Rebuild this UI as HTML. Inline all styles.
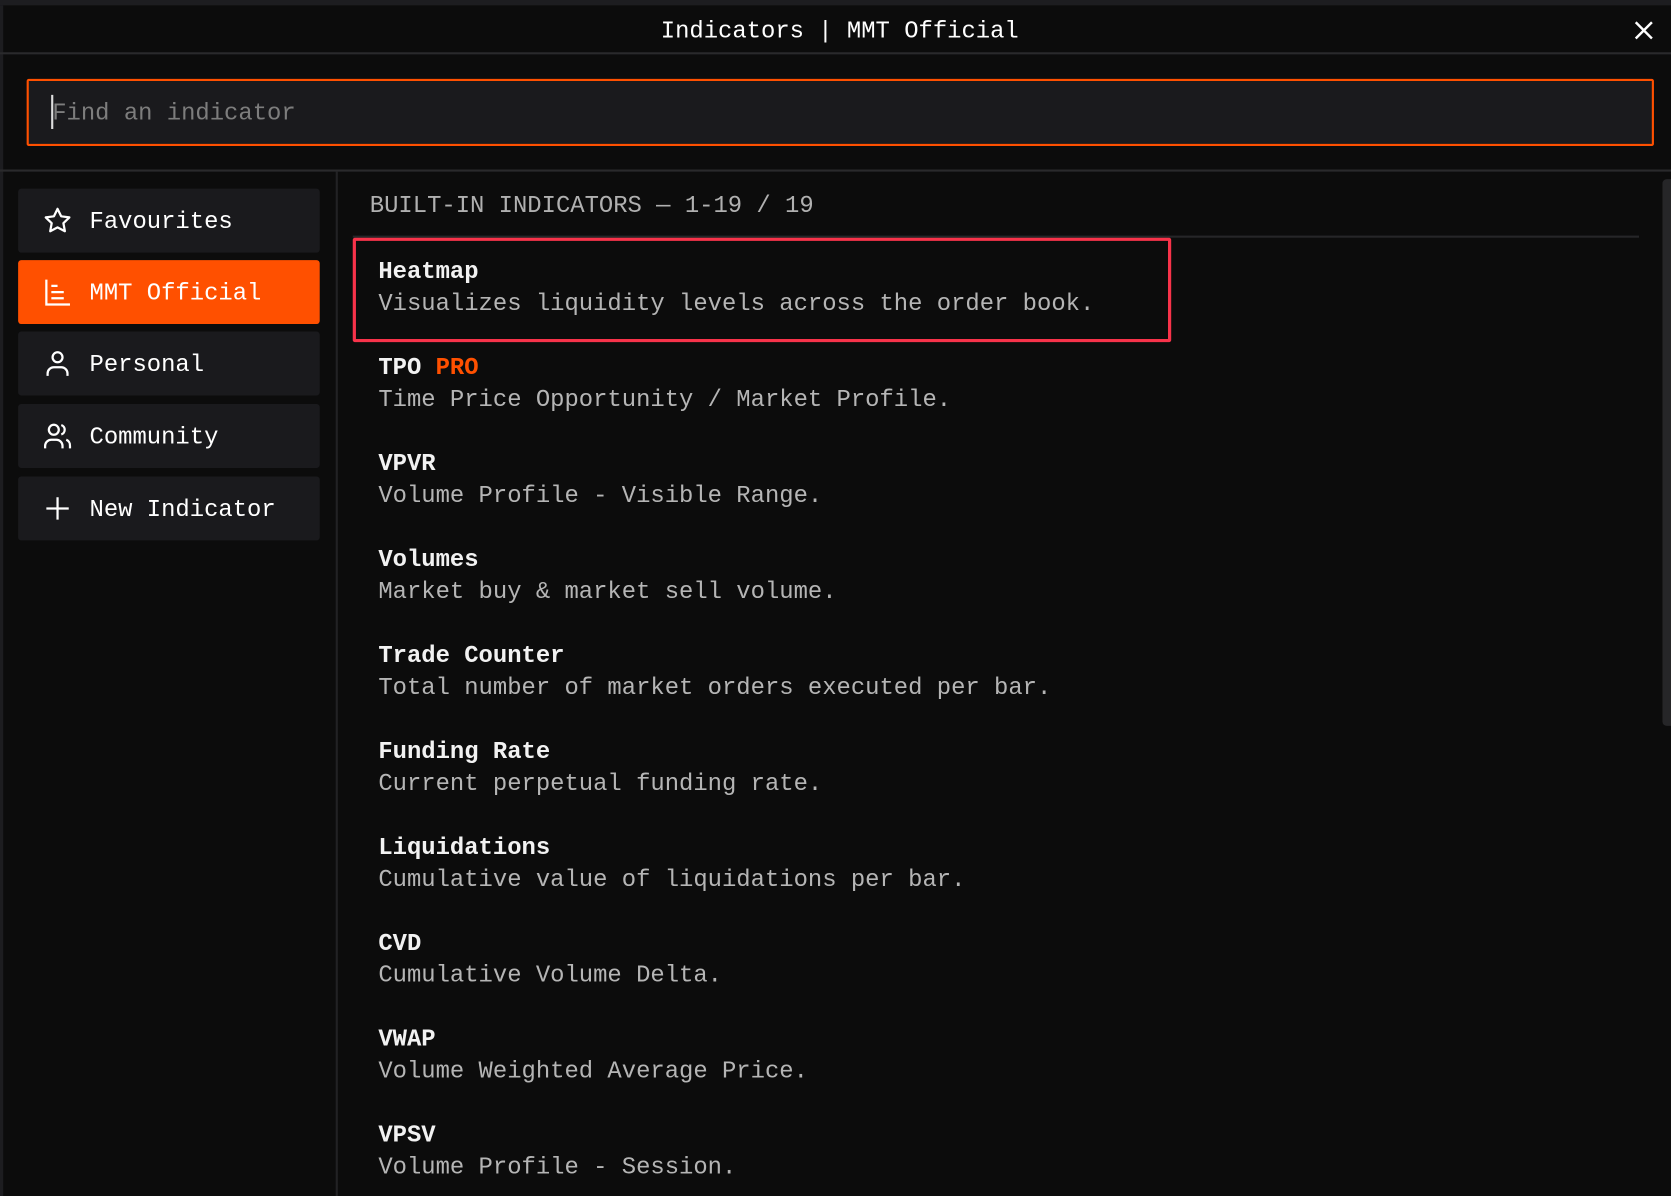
<!DOCTYPE html>
<html><head><meta charset="utf-8"><style>
html,body{margin:0;padding:0;background:#0c0c0c;width:1671px;height:1196px;overflow:hidden}
#w{position:absolute;left:0;top:0;width:1568px;height:1122px;transform:scale(1.06569,1.06595);transform-origin:0 0;font-family:"Liberation Mono",monospace;font-size:22.4px;color:#fff;background:#0c0c0c}
.a{position:absolute;white-space:pre}
.it{position:absolute;left:17px;width:283px;height:60px;background:#1a1a1d;border-radius:3px}
.it .t{position:absolute;left:67px;top:17px;line-height:28px}
.it svg{position:absolute;left:23px;top:16px}
.ti{font-weight:bold;color:#f2f2f2}
.de{color:#b5b5b5}
</style></head><body><div id="w">
<div class="a" style="left:0;top:0;width:1568px;height:5px;background:#1d1d20"></div>
<div class="a" style="left:0;top:5px;width:3px;height:1117px;background:#1d1d20"></div>
<div class="a" style="left:0;top:49px;width:1568px;height:2px;background:#2a2a2c"></div>
<div class="a" style="left:4px;top:15px;width:1568px;text-align:center;line-height:28px">Indicators | MMT Official</div>
<svg class="a" style="left:1533px;top:19px" width="19" height="19" viewBox="0 0 20 20"><path d="M2 2L18 18M18 2L2 18" stroke="#fff" stroke-width="2.4"/></svg>
<div class="a" style="left:25px;top:74px;width:1523px;height:59px;background:#1a1a1d;border:2px solid #ff5000;border-radius:2px"></div>
<div class="a" style="left:49px;top:92px;line-height:28px;color:#7d7d7d">Find an indicator</div>
<div class="a" style="left:48px;top:89px;width:2px;height:32px;background:#ddd"></div>
<div class="a" style="left:0;top:159px;width:1568px;height:2px;background:#2a2a2c"></div>
<div class="a" style="left:315px;top:161px;width:2px;height:961px;background:#222224"></div>
<div class="it" style="top:177px"><svg width="28" height="28" viewBox="0 0 24 24" fill="none" stroke="#fff" stroke-width="1.8" stroke-linejoin="round"><path d="M12 2.5l2.9 6 6.6.9-4.8 4.6 1.2 6.5L12 17.4 6.1 20.5l1.2-6.5L2.5 9.4l6.6-.9z"/></svg><span class="t">Favourites</span></div>
<div class="it" style="top:244px;background:#ff5000"><svg width="28" height="28" viewBox="0 0 24 24" fill="none" stroke="#fff" stroke-width="1.8"><path d="M3 2v20h19M7 7h5M7 12h10M7 17h10"/></svg><span class="t">MMT Official</span></div>
<div class="it" style="top:311px"><svg width="28" height="28" viewBox="0 0 24 24" fill="none" stroke="#fff" stroke-width="1.8"><circle cx="12" cy="7" r="4"/><path d="M4 22v-2a5 5 0 0 1 5-5h6a5 5 0 0 1 5 5v2"/></svg><span class="t">Personal</span></div>
<div class="it" style="top:379px"><svg width="28" height="28" viewBox="0 0 24 24" fill="none" stroke="#fff" stroke-width="1.8"><circle cx="9" cy="7" r="4"/><path d="M2 22v-2a5 5 0 0 1 5-5h4a5 5 0 0 1 5 5v2M15 3.2a4 4 0 0 1 0 7.6M19 15a5 5 0 0 1 3 5v2"/></svg><span class="t">Community</span></div>
<div class="it" style="top:447px"><svg width="28" height="28" viewBox="0 0 24 24" fill="none" stroke="#fff" stroke-width="1.8"><path d="M12 3v18M3 12h18"/></svg><span class="t">New Indicator</span></div>
<div class="a" style="left:347px;top:179px;line-height:28px;color:#b0b0b0">BUILT-IN INDICATORS — 1-19 / 19</div>
<div class="a" style="left:331px;top:221px;width:1207px;height:2px;background:#262628"></div>
<div class="a" style="left:1560px;top:168px;width:8px;height:513px;background:#262628;border-radius:4px 0 0 4px"></div>
<div class="a" style="left:331px;top:223px;width:762px;height:92px;border:3px solid #f8334a;border-radius:2px"></div>
<div class="a" style="left:355px;top:240px;line-height:30px"><span class="ti">Heatmap</span>
<span class="de">Visualizes liquidity levels across the order book.</span></div>
<div class="a" style="left:355px;top:330px;line-height:30px"><span class="ti">TPO <span style="color:#ff5000">PRO</span></span>
<span class="de">Time Price Opportunity / Market Profile.</span></div>
<div class="a" style="left:355px;top:420px;line-height:30px"><span class="ti">VPVR</span>
<span class="de">Volume Profile - Visible Range.</span></div>
<div class="a" style="left:355px;top:510px;line-height:30px"><span class="ti">Volumes</span>
<span class="de">Market buy &amp; market sell volume.</span></div>
<div class="a" style="left:355px;top:600px;line-height:30px"><span class="ti">Trade Counter</span>
<span class="de">Total number of market orders executed per bar.</span></div>
<div class="a" style="left:355px;top:690px;line-height:30px"><span class="ti">Funding Rate</span>
<span class="de">Current perpetual funding rate.</span></div>
<div class="a" style="left:355px;top:780px;line-height:30px"><span class="ti">Liquidations</span>
<span class="de">Cumulative value of liquidations per bar.</span></div>
<div class="a" style="left:355px;top:870px;line-height:30px"><span class="ti">CVD</span>
<span class="de">Cumulative Volume Delta.</span></div>
<div class="a" style="left:355px;top:960px;line-height:30px"><span class="ti">VWAP</span>
<span class="de">Volume Weighted Average Price.</span></div>
<div class="a" style="left:355px;top:1050px;line-height:30px"><span class="ti">VPSV</span>
<span class="de">Volume Profile - Session.</span></div>
</div></body></html>
